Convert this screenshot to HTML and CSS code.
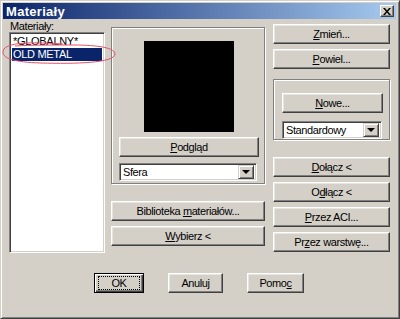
FILE: index.html
```html
<!DOCTYPE html>
<html lang="pl">
<head>
    <meta charset="UTF-8">
    <meta name="viewport" content="width=device-width, initial-scale=1.0">
    <title>Materiały</title>
    <link rel="stylesheet" href="styles.css">
</head>
<body>
    <div class="window">
        <div class="titlebar">
            <span class="title">Materiały</span>
            <span class="close-btn">
                <svg width="8" height="7" viewBox="0 0 8 7"><path d="M0 0h2l2 2.5L6 0h2L5 3.5 8 7H6L4 4.5 2 7H0l3-3.5z" fill="#000"/></svg>
            </span>
        </div>

        <div class="content">
            <!-- materials list -->
            <div class="col-left">
                <div class="label">Materiały:</div>
                <div class="listbox">
                    <div class="list-item">*GLOBALNY*</div>
                    <div class="list-item selected">OLD METAL</div>
                </div>
                <svg class="scribble" width="118" height="26" viewBox="0 0 118 26">
                    <path d="M62 3 C34 1 8 1 3 8 C-1 15 6 21 40 22 C74 23 114 22 114 13 C114 7 98 4 72 4 C50 4 30 4 14 5" fill="none" stroke="#e8506a" stroke-width="1"/>
                </svg>
            </div>

            <!-- preview -->
            <div class="col-mid">
                <div class="groupbox preview-group">
                    <div class="preview"></div>
                    <div class="btn btn-podglad"><span><u>P</u>odgląd</span></div>
                    <div class="combo combo-sfera">
                        <span class="combo-text">Sfera</span>
                        <span class="combo-arrow"><i></i></span>
                    </div>
                </div>
                <div class="btn btn-wide btn-lib"><span>Biblioteka <u>m</u>ateriałów...</span></div>
                <div class="btn btn-wide"><span><u>W</u>ybierz &lt;</span></div>
            </div>

            <!-- actions -->
            <div class="col-right">
                <div class="btn btn-side"><span><u>Z</u>mień...</span></div>
                <div class="btn btn-side"><span><u>P</u>owiel...</span></div>
                <div class="groupbox new-group">
                    <div class="btn btn-nowe"><span><u>N</u>owe...</span></div>
                    <div class="combo combo-std">
                        <span class="combo-text">Standardowy</span>
                        <span class="combo-arrow"><i></i></span>
                    </div>
                </div>
                <div class="btn btn-side btn-attach"><span><u>D</u>ołącz &lt;</span></div>
                <div class="btn btn-side"><span>O<u>d</u>łącz &lt;</span></div>
                <div class="btn btn-side"><span><u>P</u>rzez ACI...</span></div>
                <div class="btn btn-side"><span>Pr<u>z</u>ez warstwę...</span></div>
            </div>
        </div>

        <div class="footer">
            <div class="btn btn-default btn-ok"><span class="focus">OK</span></div>
            <div class="btn btn-cancel"><span>Anuluj</span></div>
            <div class="btn btn-help"><span>Pomo<u>c</u></span></div>
        </div>
    </div>
</body>
</html>
```

FILE: styles.css
```css
body {
    margin: 0;
    font-family: 'Liberation Sans', Arial, sans-serif;
    font-size: 11px;
    letter-spacing: -0.4px;
    color: #000;
    background: #d4d0c8;
}
.window {
    width: 400px;
    height: 319px;
    box-sizing: border-box;
    background: #d4d0c8;
    border: 1px solid;
    border-color: #d4d0c8 #404040 #404040 #d4d0c8;
    box-shadow: inset 1px 1px #fff, inset -1px -1px #808080;
    padding: 2px 3px 0 2px;
}
.titlebar {
    height: 16px;
    display: flex;
    align-items: center;
    justify-content: space-between;
    padding: 0 2px 0 3px;
    background: linear-gradient(to right, #0a246a, #a6caf0);
}
.title {
    color: #fff;
    font-weight: bold;
    font-size: 13px;
    letter-spacing: 0.3px;
}
.close-btn {
    width: 14px;
    height: 12px;
    box-sizing: border-box;
    display: flex;
    align-items: center;
    justify-content: center;
    background: #d4d0c8;
    border: 1px solid;
    border-color: #fff #404040 #404040 #fff;
    box-shadow: inset -1px -1px #808080;
}
.content {
    display: flex;
    align-items: flex-start;
    height: 234px;
    padding-left: 6px;
}
.col-left {
    position: relative;
    width: 96px;
    margin-right: 6px;
}
.label {
    margin-top: 2px;
    height: 11px;
    line-height: 11px;
    padding-left: 1px;
}
.listbox {
    height: 221px;
    box-sizing: border-box;
    background: #fff;
    border: 1px solid;
    border-color: #808080 #fff #fff #808080;
    box-shadow: inset 1px 1px #404040, inset -1px -1px #d4d0c8;
    padding: 2px;
}
.list-item {
    height: 13px;
    line-height: 13px;
    padding-left: 1px;
    font-size: 11px;
    letter-spacing: -0.3px;
}
.list-item.selected {
    background: #0a246a;
    color: #fff;
}
.scribble {
    position: absolute;
    left: -8px;
    top: 22px;
}
.col-mid {
    width: 154px;
    margin-right: 8px;
}
.groupbox {
    box-sizing: border-box;
    border: 1px solid #808080;
    box-shadow: inset 1px 1px #fff, 1px 1px #fff;
}
.preview-group {
    margin-top: 8px;
    height: 157px;
    padding: 13px 0 0 7px;
}
.preview {
    width: 90px;
    height: 91px;
    margin-left: 25px;
    background: #000;
}
.btn {
    height: 20px;
    box-sizing: border-box;
    display: flex;
    align-items: center;
    justify-content: center;
    background: #d4d0c8;
    border: 1px solid;
    border-color: #fff #404040 #404040 #fff;
    box-shadow: inset -1px -1px #808080, inset 1px 1px #e8e6e0;
    white-space: nowrap;
}
.btn-podglad {
    width: 140px;
    margin-top: 5px;
}
.combo {
    display: flex;
    align-items: center;
    justify-content: space-between;
    height: 18px;
    box-sizing: border-box;
    background: #fff;
    border: 1px solid;
    border-color: #808080 #fff #fff #808080;
    box-shadow: inset 1px 1px #404040, inset -1px -1px #d4d0c8;
    padding: 2px 2px 2px 3px;
}
.combo-sfera {
    width: 138px;
    margin-top: 6px;
}
.combo-arrow {
    width: 16px;
    height: 14px;
    box-sizing: border-box;
    display: flex;
    align-items: center;
    justify-content: center;
    background: #d4d0c8;
    border: 1px solid;
    border-color: #d4d0c8 #404040 #404040 #d4d0c8;
    box-shadow: inset 1px 1px #fff, inset -1px -1px #808080;
}
.combo-arrow i {
    width: 0;
    height: 0;
    border-left: 4px solid transparent;
    border-right: 4px solid transparent;
    border-top: 4px solid #000;
}
.btn-wide {
    margin-top: 5px;
}
.btn-lib {
    margin-top: 17px;
}
.col-right {
    width: 117px;
}
.btn-side {
    margin-top: 5px;
}
.new-group {
    margin-top: 10px;
    height: 61px;
    padding: 13px 0 0 8px;
}
.btn-nowe {
    width: 101px;
}
.combo-std {
    width: 100px;
    margin-top: 8px;
}
.btn-attach {
    margin-top: 17px;
}
.footer {
    display: flex;
    margin-top: 20px;
    padding-left: 91px;
}
.btn-ok {
    width: 50px;
}
.btn-default {
    border: 1px solid #000;
    box-shadow: inset 1px 1px #fff, inset -1px -1px #404040, inset -2px -2px #808080;
}
.focus {
    display: flex;
    align-items: center;
    justify-content: center;
    width: 40px;
    height: 12px;
    border: 1px dotted #000;
}
.btn-cancel {
    width: 55px;
    margin-left: 24px;
}
.btn-help {
    width: 57px;
    margin-left: 24px;
}
```
